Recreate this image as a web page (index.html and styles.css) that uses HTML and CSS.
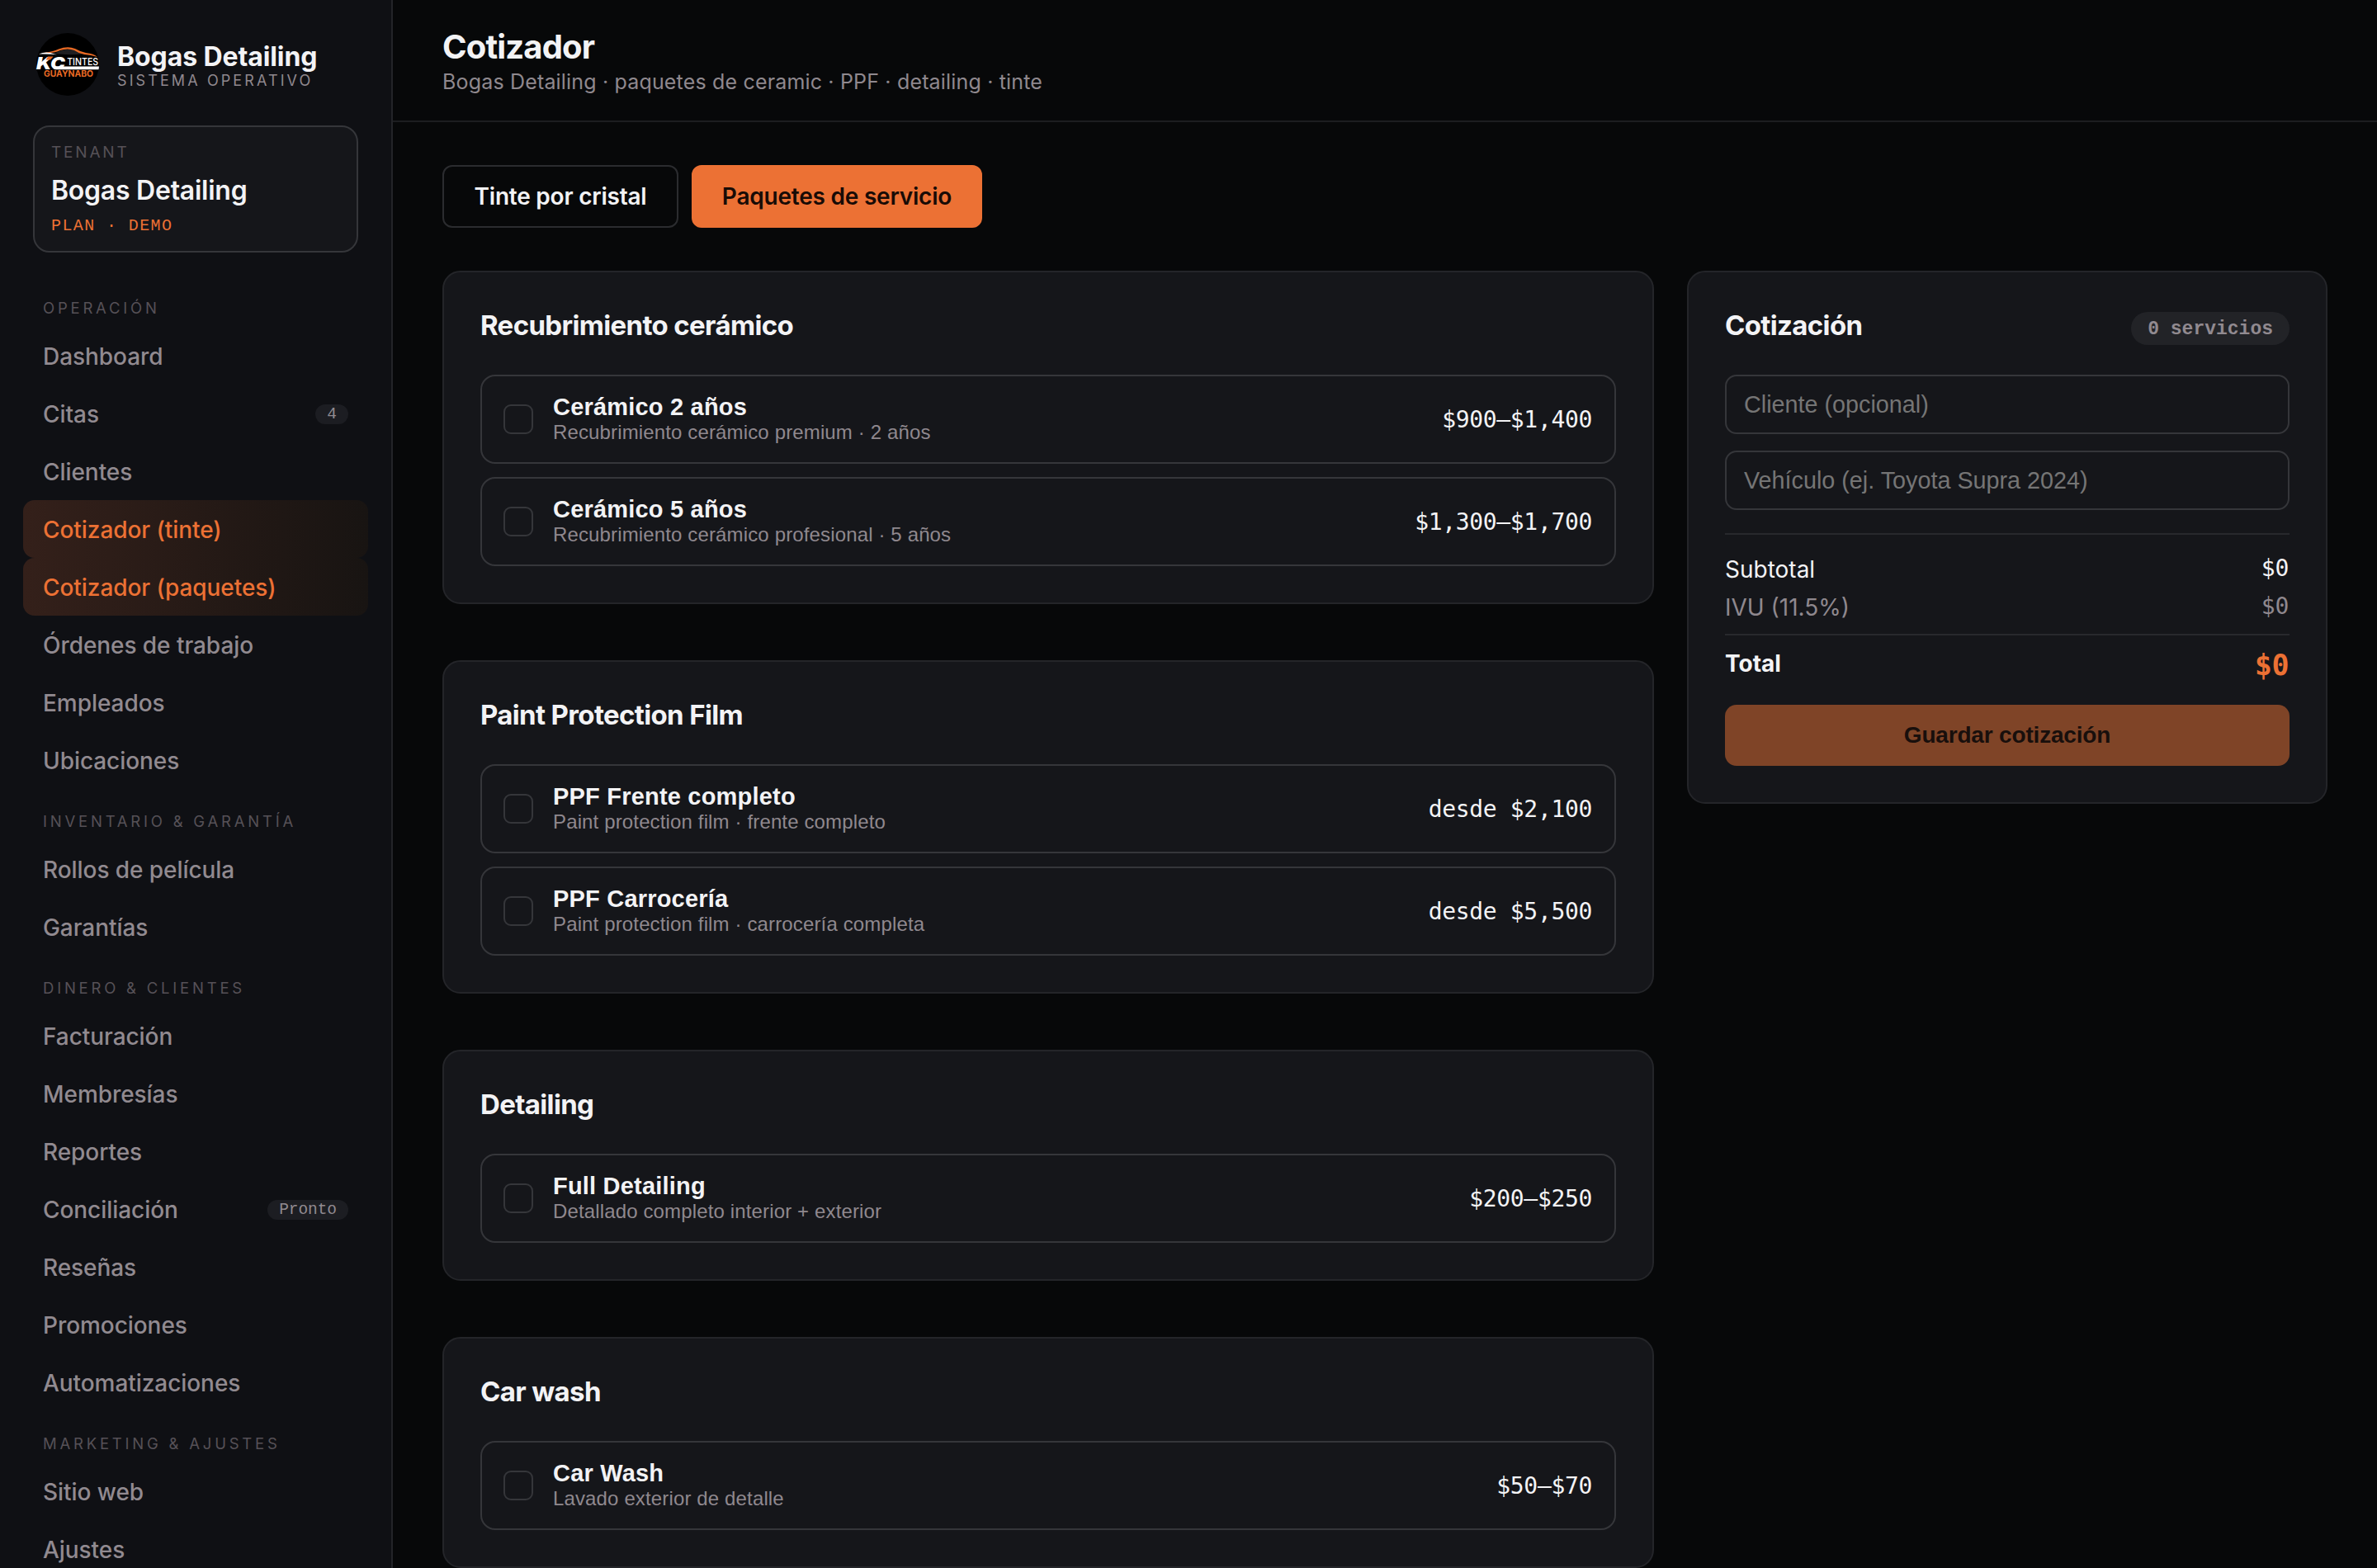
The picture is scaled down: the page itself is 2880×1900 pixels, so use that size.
FILE: index.html
```html
<!DOCTYPE html>
<html lang="es">
<head>
<meta charset="utf-8">
<title>Cotizador · Bogas Detailing</title>
<link rel="stylesheet" href="styles.css">
</head>
<body>
<div class="app">
  <aside class="sidebar">
    <div class="brand">
      <svg class="brand-logo" viewBox="0 0 76 76" role="img" aria-label="KC Tintes Guaynabo">
        <circle cx="38" cy="38" r="38" fill="#000"/>
        <path d="M22 25 Q32 18.500 46 20 Q52 22 56 25.500 Q38 27 22 25Z" fill="#1f1f21"/>
        <path d="M9 24 Q20 22.500 27 19.500 Q38 15.500 47 19 Q54 23 60 24 Q70 25 74 29 Q66 26.500 58 26 Q52 25 46 21 Q38 17.800 29 21 Q20 25 9 24Z" fill="#e96a24"/>
        <path d="M3 25.500 Q12 21.500 22 25.500 Q25 26.500 28 26.500 Q14 25 3 25.500Z" fill="#fff"/>
        <text class="logo-mark" x="0" y="44.300" textLength="35" lengthAdjust="spacingAndGlyphs">KC</text>
        <path d="M20 40.400 H75.900 Q75.900 42.500 75.400 44.300 H24 Q20 44 20 40.400Z" fill="#fff"/>
        <path d="M14 28.500 L20.500 28.500 L17 32.500 L11.500 32.500Z" fill="#e96a24"/>
        <text class="logo-name" x="37.200" y="39.300" textLength="38" lengthAdjust="spacingAndGlyphs">TINTES</text>
        <text class="logo-city" x="9" y="53" textLength="60" lengthAdjust="spacingAndGlyphs">GUAYNABO</text>
      </svg>
      <div class="brand-text">
        <div class="brand-name">Bogas Detailing</div>
        <div class="brand-sub">SISTEMA OPERATIVO</div>
      </div>
    </div>
    <div class="tenant">
      <div class="tenant-label">TENANT</div>
      <div class="tenant-name">Bogas Detailing</div>
      <div class="tenant-plan">PLAN · DEMO</div>
    </div>
    <nav class="nav">
      <div class="nav-label">OPERACIÓN</div>
      <a class="nav-item">Dashboard</a>
      <a class="nav-item">Citas<span class="nav-badge">4</span></a>
      <a class="nav-item">Clientes</a>
      <a class="nav-item active">Cotizador (tinte)</a>
      <a class="nav-item active">Cotizador (paquetes)</a>
      <a class="nav-item">Órdenes de trabajo</a>
      <a class="nav-item">Empleados</a>
      <a class="nav-item">Ubicaciones</a>
      <div class="nav-label">INVENTARIO &amp; GARANTÍA</div>
      <a class="nav-item">Rollos de película</a>
      <a class="nav-item">Garantías</a>
      <div class="nav-label">DINERO &amp; CLIENTES</div>
      <a class="nav-item">Facturación</a>
      <a class="nav-item">Membresías</a>
      <a class="nav-item">Reportes</a>
      <a class="nav-item">Conciliación<span class="nav-badge">Pronto</span></a>
      <a class="nav-item">Reseñas</a>
      <a class="nav-item">Promociones</a>
      <a class="nav-item">Automatizaciones</a>
      <div class="nav-label">MARKETING &amp; AJUSTES</div>
      <a class="nav-item">Sitio web</a>
      <a class="nav-item">Ajustes</a>
    </nav>
  </aside>
  <main class="main">
    <header class="topbar">
      <h1 class="page-title">Cotizador</h1>
      <p class="page-sub">Bogas Detailing · paquetes de ceramic · PPF · detailing · tinte</p>
    </header>
    <div class="content">
      <div class="tabs">
        <button class="tab tab-outline">Tinte por cristal</button>
        <button class="tab tab-primary">Paquetes de servicio</button>
      </div>
      <div class="columns">
        <div class="groups">
          <section class="card">
            <h2 class="card-title">Recubrimiento cerámico</h2>
            <div class="options">
              <label class="option"><span class="check"></span><span class="option-text"><b class="option-name">Cerámico 2 años</b><span class="option-desc">Recubrimiento cerámico premium · 2 años</span></span><span class="price">$900–$1,400</span></label>
              <label class="option"><span class="check"></span><span class="option-text"><b class="option-name">Cerámico 5 años</b><span class="option-desc">Recubrimiento cerámico profesional · 5 años</span></span><span class="price">$1,300–$1,700</span></label>
            </div>
          </section>
          <section class="card">
            <h2 class="card-title">Paint Protection Film</h2>
            <div class="options">
              <label class="option"><span class="check"></span><span class="option-text"><b class="option-name">PPF Frente completo</b><span class="option-desc">Paint protection film · frente completo</span></span><span class="price">desde $2,100</span></label>
              <label class="option"><span class="check"></span><span class="option-text"><b class="option-name">PPF Carrocería</b><span class="option-desc">Paint protection film · carrocería completa</span></span><span class="price">desde $5,500</span></label>
            </div>
          </section>
          <section class="card">
            <h2 class="card-title">Detailing</h2>
            <div class="options">
              <label class="option"><span class="check"></span><span class="option-text"><b class="option-name">Full Detailing</b><span class="option-desc">Detallado completo interior + exterior</span></span><span class="price">$200–$250</span></label>
            </div>
          </section>
          <section class="card">
            <h2 class="card-title">Car wash</h2>
            <div class="options">
              <label class="option"><span class="check"></span><span class="option-text"><b class="option-name">Car Wash</b><span class="option-desc">Lavado exterior de detalle</span></span><span class="price">$50–$70</span></label>
            </div>
          </section>
        </div>
        <section class="card quote">
          <div class="quote-head">
            <h2 class="card-title">Cotización</h2>
            <span class="count">0 servicios</span>
          </div>
          <div class="fields">
            <input class="field" type="text" placeholder="Cliente (opcional)">
            <input class="field" type="text" placeholder="Vehículo (ej. Toyota Supra 2024)">
          </div>
          <div class="totals">
            <div class="line"><span>Subtotal</span><span class="amount">$0</span></div>
            <div class="line muted"><span>IVU (11.5%)</span><span class="amount">$0</span></div>
          </div>
          <div class="grand"><span>Total</span><span class="grand-amount">$0</span></div>
          <button class="save">Guardar cotización</button>
        </section>
      </div>
    </div>
  </main>
</div>
</body>
</html>
```
FILE: styles.css
```css
* { box-sizing: border-box; }

body {
  margin: 0;
  background: #070809;
  color: #f3f3f5;
  font-family: Inter, "Liberation Sans", sans-serif;
  font-size: 28px;
}

h1, h2, p { margin: 0; }

button, input { font: inherit; margin: 0; }

.app {
  display: grid;
  grid-template-columns: 476px minmax(0, 1fr);
  height: 1900px;
  overflow: hidden;
}

/* Sidebar */
.sidebar {
  background: #0f1014;
  border-right: 2px solid #232428;
  padding-top: 40px;
  height: 1900px;
  overflow: hidden;
}

.brand {
  display: flex;
  gap: 22px;
  padding-left: 44px;
  height: 76px;
}

.brand-logo { width: 76px; height: 76px; flex: none; overflow: visible; }
.logo-mark { font: italic 900 20.5px Inter, sans-serif; fill: #fff; }
.logo-name { font: 500 12px Inter, sans-serif; fill: #fff; }
.logo-city { font: 700 10.5px Inter, sans-serif; fill: #e96a24; }

.brand-text { padding-top: 12px; }
.brand-name { font-size: 32px; line-height: 34px; letter-spacing: -0.1px; font-weight: 700; white-space: nowrap; }
.brand-sub { font-size: 18px; line-height: 24px; letter-spacing: 3.1px; color: #8f888e; white-space: nowrap; }

.tenant {
  margin: 36px 40px 0;
  width: 394px;
  height: 154px;
  padding: 18px 20px 0;
  border: 2px solid #35363a;
  border-radius: 20px;
  background: #15161a;
}
.tenant-label { font-size: 19px; line-height: 26px; letter-spacing: 2.8px; color: #565157; }
.tenant-name { margin-top: 15px; font-size: 32px; line-height: 36px; letter-spacing: -0.25px; font-weight: 600; }
.tenant-plan { margin-top: 12px; font: 20px/26px "Liberation Mono", monospace; letter-spacing: 1.4px; color: #ec7134; }

.nav { margin: 28px 28px 0; width: 418px; }
.nav-label {
  height: 62px;
  padding: 25px 24px 0;
  font-size: 18.5px;
  line-height: 29px;
  letter-spacing: 3.78px;
  color: #565157;
  white-space: nowrap;
}
.nav-item {
  display: flex;
  align-items: center;
  justify-content: space-between;
  height: 70px;
  padding: 2px 24px 0;
  border-radius: 14px;
  color: #918a90;
  font-weight: 500;
  letter-spacing: -0.06px;
  white-space: nowrap;
}
.nav-item.active {
  color: #ec7134;
  background: linear-gradient(90deg, #34201a, #181412);
}
.nav-badge {
  height: 24px;
  padding: 0 14px;
  border-radius: 12px;
  background: #1c1d22;
  font: 19.5px/24px "Liberation Mono", monospace;
}

/* Main column */
.topbar {
  height: 148px;
  padding: 34px 60px 0;
  border-bottom: 2px solid #1c1d20;
}
.page-title { font-size: 40px; line-height: 46px; letter-spacing: -0.85px; font-weight: 700; }
.page-sub { margin-top: 1px; font-size: 25px; line-height: 36px; letter-spacing: 0.17px; color: #8f888e; }

.content { padding: 52px 60px 0; }

.tabs { display: flex; gap: 16px; margin-bottom: 52px; }
.tab {
  height: 76px;
  padding: 0;
  border: 2px solid #2b2c2f;
  border-radius: 12px;
  font-weight: 600;
  letter-spacing: -0.22px;
  color: #f3f3f5;
}
.tab-outline { width: 286px; background: transparent; }
.tab-primary { width: 352px; background: #ec7134; border-color: #ec7134; color: #180b06; }

.columns {
  display: grid;
  grid-template-columns: minmax(0, 1fr) 776px;
  gap: 40px;
  align-items: start;
}
.groups { display: flex; flex-direction: column; gap: 68px; }

.card {
  padding: 44px;
  border: 2px solid #242529;
  border-radius: 22px;
  background: #15161a;
}
.card-title { font-size: 33px; line-height: 40px; letter-spacing: -0.65px; font-weight: 700; }

.options { display: flex; flex-direction: column; gap: 16px; margin-top: 40px; }
.option {
  display: flex;
  align-items: center;
  height: 108px;
  padding: 0 27px 0 26px;
  border: 2px solid #35363a;
  border-radius: 18px;
}
.check {
  width: 36px;
  height: 36px;
  margin-right: 24px;
  border: 2px solid #35363a;
  border-radius: 9px;
}
.option-text {
  flex: 1;
  display: flex;
  flex-direction: column;
  align-items: flex-start;
  font-family: "Liberation Sans", Arial, sans-serif;
}
.option-name { font-size: 29px; line-height: 32px; letter-spacing: 0.2px; font-weight: 700; }
.option-desc { font-size: 24px; line-height: 30px; letter-spacing: 0.14px; color: #8f888e; }
.price { font-family: "DejaVu Sans Mono", monospace; font-size: 28px; letter-spacing: -0.33px; }

/* Quote summary */
.quote-head { display: flex; justify-content: space-between; align-items: flex-start; height: 80px; }
.count {
  height: 40px;
  margin-top: 4px;
  padding: 0 20px;
  border-radius: 20px;
  background: #222327;
  color: #918a90;
  font: 700 23px/42px "Liberation Mono", monospace;
}
.fields { display: flex; flex-direction: column; gap: 20px; }
.field {
  width: 100%;
  height: 72px;
  padding: 0 21px;
  border: 2px solid #35363a;
  border-radius: 14px;
  background: transparent;
  color: #f3f3f5;
  font-family: "Liberation Sans", Arial, sans-serif;
  font-size: 28.75px;
}
.field::placeholder { color: #757575; opacity: 1; }

.totals { margin-top: 28px; padding: 19px 0 9px; border: solid #28292d; border-width: 2px 0; }
.line { display: flex; justify-content: space-between; align-items: flex-start; line-height: 46px; }
.muted { color: #8f888e; }
.amount { padding-right: 1px; font-family: "DejaVu Sans Mono", monospace; letter-spacing: -0.28px; line-height: 43px; }
.grand {
  display: flex;
  justify-content: space-between;
  align-items: flex-start;
  height: 84px;
  padding-top: 11px;
  font-weight: 700;
  line-height: 46px;
}
.grand-amount { padding-right: 1px; font: 700 35px/50px "DejaVu Sans Mono", monospace; letter-spacing: -0.5px; color: #ec7134; }
.save {
  display: block;
  width: 100%;
  height: 74px;
  border: 0;
  border-radius: 14px;
  background: #7f4427;
  color: #180f0c;
  font: 700 28px "Liberation Sans", Arial, sans-serif;
  letter-spacing: -0.18px;
}
```
